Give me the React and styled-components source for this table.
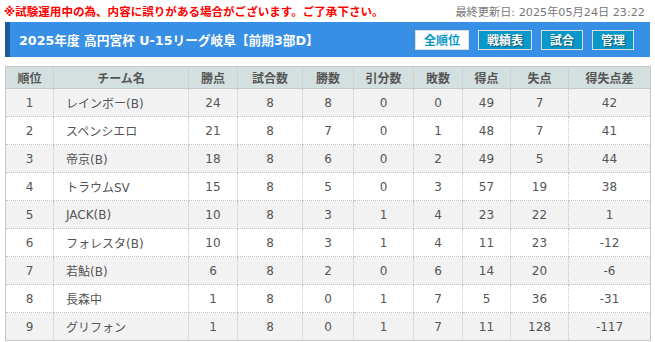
import React from "react";
import styled, { createGlobalStyle } from "styled-components";

const GlobalStyle = createGlobalStyle`
  html, body {
    margin: 0;
    padding: 0;
    background: #fff;
  }
  body {
    font-family: "DejaVu Sans", "Noto Sans CJK JP", sans-serif;
    color: #555;
  }
`;

const Page = styled.div`
  width: 655px;
  padding: 0 5px;
  box-sizing: border-box;
`;

const TopLine = styled.div`
  display: flex;
  justify-content: space-between;
  align-items: center;
  height: 22px;
  padding-right: 5px;
  .notice {
    color: #f00;
    font-weight: bold;
    font-size: 11.55px;
    margin-left: -1px;
  }
  .updated {
    color: #777;
    font-size: 11.2px;
  }
`;

const TitleBar = styled.div`
  display: flex;
  align-items: center;
  justify-content: space-between;
  height: 35px;
  background: #3890e6;
  border-left: 5px solid #1b5a9c;
  padding: 0 16px 0 9px;
  box-sizing: border-box;
  h1 {
    margin: 0;
    font-size: 12.7px;
    font-weight: bold;
    color: #fff;
  }
`;

const Buttons = styled.div`
  display: flex;
  gap: 9px;
  align-items: center;
`;

const NavButton = styled.div`
  height: 20px;
  box-sizing: border-box;
  padding: 0 8px;
  border: 1px solid #ddd;
  background: ${(p) => (p.$active ? "#fff" : "#0a97c9")};
  color: ${(p) => (p.$active ? "#0a97c9" : "#fff")};
  font-size: 12px;
  font-weight: bold;
  display: flex;
  align-items: center;
  text-shadow: ${(p) => (p.$active ? "none" : "1px 1px 1px rgba(0,0,0,0.45)")};
`;

const Table = styled.table`
  margin-top: 9px;
  width: 645px;
  border-collapse: collapse;
  border: 1px solid #c8c8c8;
  font-size: 12px;
  table-layout: fixed;
  th, td {
    border: 1px dotted #c4c4c4;
    text-align: center;
    padding: 0;
  }
  th {
    height: 21px;
    background: #d4dfdf;
    color: #555;
    font-weight: bold;
    border-bottom: 1px solid #c8c8c8;
  }
  td {
    height: 27px;
    color: #555;
  }
  tbody tr:nth-child(odd) td {
    background: #f2f2f2;
  }
  td.team {
    text-align: left;
    padding-left: 12px;
  }
`;

const rows = [
  [1, "レインボー(B)", 24, 8, 8, 0, 0, 49, 7, 42],
  [2, "スペンシエロ", 21, 8, 7, 0, 1, 48, 7, 41],
  [3, "帝京(B)", 18, 8, 6, 0, 2, 49, 5, 44],
  [4, "トラウムSV", 15, 8, 5, 0, 3, 57, 19, 38],
  [5, "JACK(B)", 10, 8, 3, 1, 4, 23, 22, 1],
  [6, "フォレスタ(B)", 10, 8, 3, 1, 4, 11, 23, -12],
  [7, "若鮎(B)", 6, 8, 2, 0, 6, 14, 20, -6],
  [8, "長森中", 1, 8, 0, 1, 7, 5, 36, -31],
  [9, "グリフォン", 1, 8, 0, 1, 7, 11, 128, -117],
];

const cols = [
  ["順位", 48],
  ["チーム名", 135],
  ["勝点", 49],
  ["試合数", 65],
  ["勝数", 51],
  ["引分数", 60],
  ["敗数", 49],
  ["得点", 48],
  ["失点", 58],
  ["得失点差", 82],
];

export default function App() {
  return (
    <Page>
      <GlobalStyle />
      <TopLine>
        <span className="notice">
          ※試験運用中の為、内容に誤りがある場合がございます。ご了承下さい。
        </span>
        <span className="updated">最終更新日: 2025年05月24日 23:22</span>
      </TopLine>
      <TitleBar>
        <h1>2025年度 高円宮杯 U-15リーグ岐阜【前期3部D】</h1>
        <Buttons>
          <NavButton $active>全順位</NavButton>
          <NavButton>戦績表</NavButton>
          <NavButton>試合</NavButton>
          <NavButton>管理</NavButton>
        </Buttons>
      </TitleBar>
      <Table>
        <colgroup>
          {cols.map(([n, w]) => (
            <col key={n} style={{ width: w }} />
          ))}
        </colgroup>
        <thead>
          <tr>
            {cols.map(([n]) => (
              <th key={n}>{n}</th>
            ))}
          </tr>
        </thead>
        <tbody>
          {rows.map((r) => (
            <tr key={r[0]}>
              {r.map((v, i) => (
                <td key={i} className={i === 1 ? "team" : undefined}>
                  {v}
                </td>
              ))}
            </tr>
          ))}
        </tbody>
      </Table>
    </Page>
  );
}
